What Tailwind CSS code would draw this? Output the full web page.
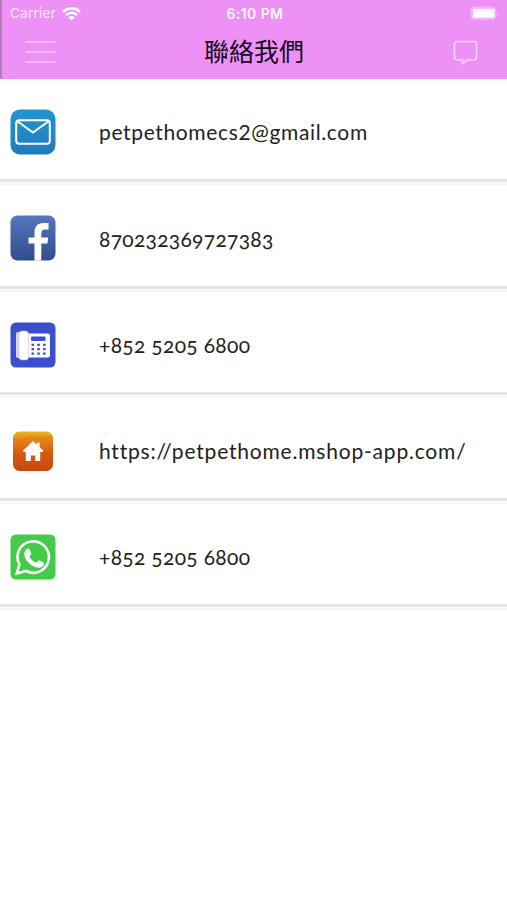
<!DOCTYPE html>
<html lang="zh-Hant">
<head>
    <meta charset="UTF-8">
    <meta name="viewport" content="width=device-width, initial-scale=1.0">
    <title>聯絡我們</title>
    <script src="https://cdn.jsdelivr.net/npm/@tailwindcss/browser@4"></script>
</head>

<body class="bg-white h-screen overflow-hidden font-['Lato','Noto_Sans_CJK_TC',sans-serif] text-[#222]">
    <!-- Header -->
    <header class="h-[79px] bg-[#ed91f7] border-l-2 border-[#b27abb]">
        <div class="h-[27px] grid grid-cols-3 items-center pl-2 pr-[7px] text-white font-['Inter',sans-serif]">
            <div class="flex items-center gap-[6px] text-[13.5px] text-white/80 tracking-[0.25px]">
                <span>Carrier</span>
                <svg class="w-[19px] h-[15px]" viewBox="0 0 19 15" fill="none" stroke="white" stroke-width="2.6">
                    <path d="M1 5.7a12.2 12.2 0 0 1 17 0M4 9a8 8 0 0 1 11 0"/>
                    <path d="M9.5 14.6 6.2 11.3a4.7 4.7 0 0 1 6.6 0z" fill="white" stroke="none"/>
                </svg>
            </div>
            <div class="text-center text-sm font-semibold tracking-[0.4px] text-white/90">6:10 PM</div>
            <svg class="w-[30px] h-[15px] justify-self-end" viewBox="0 0 30 15">
                <rect x="1" y="1" width="25" height="12.5" rx="3.5" fill="#f4baf9" stroke="#f2aef9"/>
                <rect x="3" y="3" width="21.5" height="8.5" rx="1.5" fill="white"/>
                <path d="M27.5 5v4.5q2-2.2 0-4.5" fill="#f5c0fa"/>
            </svg>
        </div>
        <div class="h-[50px] grid grid-cols-3 items-center pl-[23px] pr-[28px]">
            <svg class="w-[31px] h-[24px]" viewBox="0 0 31 24" stroke="#f8c8fb" stroke-width="1.7">
                <path d="M0.5 2h30M0.5 12h30M0.5 22h30"/>
            </svg>
            <h1 class="pl-1 pb-1 text-center text-[25px] leading-none text-[#16091a] font-['Noto_Sans_CJK_TC',sans-serif] whitespace-nowrap">聯絡我們</h1>
            <svg class="w-[26px] h-[26px] justify-self-end" viewBox="0 0 26 26" fill="none" stroke="#f9d2fc" stroke-width="1.7" stroke-linejoin="round">
                <path d="M4.5 2.500h16a3 3 0 0 1 3 3v12.500a3 3 0 0 1-3 3H13.500L9.500 24.800v-3.800h-5a3 3 0 0 1-3-3V5.500a3 3 0 0 1 3-3z"/>
            </svg>
        </div>
    </header>

    <!-- Contact list -->
    <ul>
        <li class="h-[106.3px] flex flex-col">
            <div class="flex-1 flex items-center pl-[10px] pt-[5px]">
                <svg class="w-[46px] h-[46px]" viewBox="0 0 46 46">
                    <defs>
                        <linearGradient id="mail" x1="0" y1="0" x2="0" y2="1"><stop stop-color="#2096d3"/><stop offset="1" stop-color="#207bbb"/></linearGradient>
                    </defs>
                    <rect x="0.5" y="0.5" width="45" height="45" rx="9.5" fill="url(#mail)"/>
                    <rect x="6.2" y="11.3" width="33.6" height="23.5" rx="3" fill="none" stroke="white" stroke-width="2"/>
                    <path d="m7 12 16 11.5L39 12" fill="none" stroke="white" stroke-width="2"/>
                </svg>
                <span class="pl-[43px] text-[21px] tracking-[0.64px]">petpethomecs2@gmail.com</span>
            </div>
            <div class="h-[3px] bg-[#e4e4e4]"></div>
            <div class="h-[3px] border-b-2 border-[#f5f5f5]"></div>
        </li>
        <li class="h-[106.3px] flex flex-col">
            <div class="flex-1 flex items-center pl-[10px] pt-[6px]">
                <svg class="w-[46px] h-[46px]" viewBox="0 0 46 46">
                    <defs>
                        <linearGradient id="fb" x1="0" y1="0" x2="0" y2="1"><stop stop-color="#5478be"/><stop offset="1" stop-color="#304d8b"/></linearGradient>
                    </defs>
                    <rect x="0.5" y="0.5" width="45" height="45" rx="7" fill="url(#fb)"/>
                    <path d="M24.500 45.500V28.500h-6v-6h6v-5c0-6.500 3.500-9.500 9.500-9.500h4.500v6.500h-3.200c-3 0-4 1.500-4 3.800v4.200h7l-.9 6h-6.100v17z" fill="white"/>
                </svg>
                <span class="pl-[43px] text-[21px] oldstyle-nums tracking-[0.3px]">870232369727383</span>
            </div>
            <div class="h-[3px] bg-[#e4e4e4]"></div>
            <div class="h-[3px] border-b-2 border-[#f5f5f5]"></div>
        </li>
        <li class="h-[106.3px] flex flex-col">
            <div class="flex-1 flex items-center pl-[10px] pt-[6px]">
                <svg class="w-[46px] h-[46px]" viewBox="0 0 46 46">
                    <rect x="0.5" y="0.5" width="45" height="45" rx="5.5" fill="#3d4fce"/>
                    <rect x="6" y="10" width="5" height="26" rx="2" fill="#d4d8f6"/>
                    <rect x="17" y="11.5" width="23" height="24" rx="2" fill="white"/>
                    <rect x="9" y="9" width="9.5" height="29" rx="3" fill="white" stroke="#b7beee" stroke-width="0.6"/>
                    <rect x="21" y="14.5" width="14.5" height="4.5" rx="1" fill="#3d4fce"/>
                    <path d="M21.5 22.8h15M21.5 27.2h15M21.5 31.6h15" stroke="#3d4fce" stroke-width="2.2" stroke-dasharray="2.5 3.3"/>
                </svg>
                <span class="pl-[43px] text-[21px] oldstyle-nums tracking-[0.32px]">+852 5205 6800</span>
            </div>
            <div class="h-[3px] bg-[#e4e4e4]"></div>
            <div class="h-[3px] border-b-2 border-[#f5f5f5]"></div>
        </li>
        <li class="h-[106.3px] flex flex-col">
            <div class="flex-1 flex items-center pl-[10px] pt-[5px]">
                <svg class="w-[46px] h-[46px]" viewBox="0 0 46 46">
                    <defs>
                        <linearGradient id="home" x1="0" y1="0" x2="0" y2="1"><stop stop-color="#efb51d"/><stop offset="0.2" stop-color="#e58418"/><stop offset="0.55" stop-color="#d65a12"/><stop offset="1" stop-color="#c8470e"/></linearGradient>
                    </defs>
                    <rect x="3" y="3.5" width="40" height="39.5" rx="6.5" fill="url(#home)"/>
                    <path d="M4 13q9 0 14-3t11 1q7 1 13-3" fill="none" stroke="#c9600d" stroke-opacity="0.35"/>
                    <path d="M23 13 12.8 22.8l1 1.200h2V33h5v-5.500h4.400V33h5v-9h2.200l1-1.200-3.700-3.600V14.500h-2.500v2.300z" fill="white"/>
                </svg>
                <span class="pl-[43px] text-[21px] tracking-[0.8px]">https://petpethome.mshop-app.com/</span>
            </div>
            <div class="h-[3px] bg-[#e4e4e4]"></div>
            <div class="h-[3px] border-b-2 border-[#f5f5f5]"></div>
        </li>
        <li class="h-[106.3px] flex flex-col">
            <div class="flex-1 flex items-center pl-[10px] pt-[5px]">
                <svg class="w-[46px] h-[46px]" viewBox="0 0 46 46">
                    <rect x="0.5" y="0.5" width="45" height="45" rx="5.5" fill="#43cb49"/>
                    <path d="M6.7 39.5 9.4 30.5A15.7 15.7 0 1 1 16 37z" fill="none" stroke="white" stroke-width="2.6"/>
                    <path d="M17.5 14.5c.8-.3 1.6 0 2 .8l1.6 3.8c.4 1-.1 1.7-1.700 3.400 1.800 3.300 4 5.100 7 6.300 1.800-2.200 2.200-2.800 3.300-2.300l3.800 1.900c1 .5.7 1.800.3 2.700-.9 2-3.600 3-5.800 2.600-7-1.400-12.600-7-13.600-12.300-.5-2.800 1-6.100 3.100-6.900z" fill="white"/>
                </svg>
                <span class="pl-[43px] text-[21px] oldstyle-nums tracking-[0.32px]">+852 5205 6800</span>
            </div>
            <div class="h-[3px] bg-[#e4e4e4]"></div>
            <div class="h-[3px] border-b-2 border-[#f5f5f5]"></div>
        </li>
    </ul>
</body>
</html>
